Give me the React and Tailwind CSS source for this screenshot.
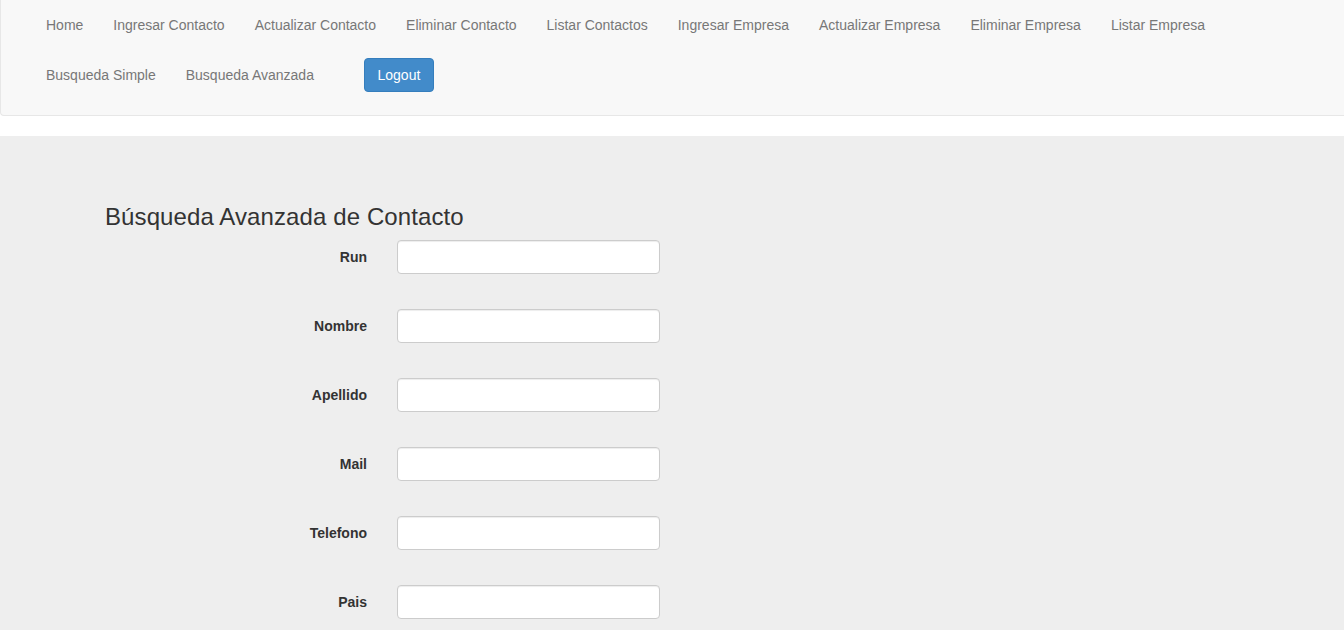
import React from 'react';

const topLinks = [
  'Home',
  'Ingresar Contacto',
  'Actualizar Contacto',
  'Eliminar Contacto',
  'Listar Contactos',
  'Ingresar Empresa',
  'Actualizar Empresa',
  'Eliminar Empresa',
  'Listar Empresa',
];

const fields = ['Run', 'Nombre', 'Apellido', 'Mail', 'Telefono', 'Pais'];

function NavLink({ label }) {
  return (
    <a href="#" className="block px-[15px] py-[15px] leading-5 text-[14px] text-[#777] hover:text-[#333]">
      {label}
    </a>
  );
}

function App() {
  return (
    <div className="min-h-screen bg-white text-[#333] text-[14px]" style={{ fontFamily: '"Liberation Sans", Arial, sans-serif' }}>
      <nav className="bg-[#f8f8f8] border-l border-b border-[#e7e7e7] rounded-bl h-[116px] mb-5">
        <div className="pl-[30px]">
          <ul className="flex">
            {topLinks.map((l) => (
              <li key={l}>
                <NavLink label={l} />
              </li>
            ))}
          </ul>
          <ul className="flex items-start">
            <li>
              <NavLink label="Busqueda Simple" />
            </li>
            <li>
              <NavLink label="Busqueda Avanzada" />
            </li>
            <li className="ml-[35px] mt-2">
              <button className="h-[34px] w-[70px] rounded bg-[#428bca] border border-[#357ebd] text-white text-[14px] leading-5">
                Logout
              </button>
            </li>
          </ul>
        </div>
      </nav>

      <div className="bg-[#eee] pt-12 pb-12">
        <div className="w-[1170px] mx-auto px-[15px]">
          <h3 className="text-[24px] leading-[1.1] mt-5 mb-[10px] pl-[3px] tracking-[0.1px]">Búsqueda Avanzada de Contacto</h3>
          <form className="flex flex-col gap-[35px]">
            {fields.map((f) => (
              <div key={f} className="flex items-center">
                <label className="w-[280px] pr-[15px] text-right font-bold">{f}</label>
                <div className="pl-[15px]">
                  <input
                    type="text"
                    className="w-[263px] h-[34px] px-3 bg-white border border-[#ccc] rounded shadow-[inset_0_1px_1px_rgba(0,0,0,0.075)] outline-none"
                  />
                </div>
              </div>
            ))}
          </form>
        </div>
      </div>
    </div>
  );
}

export default App;
